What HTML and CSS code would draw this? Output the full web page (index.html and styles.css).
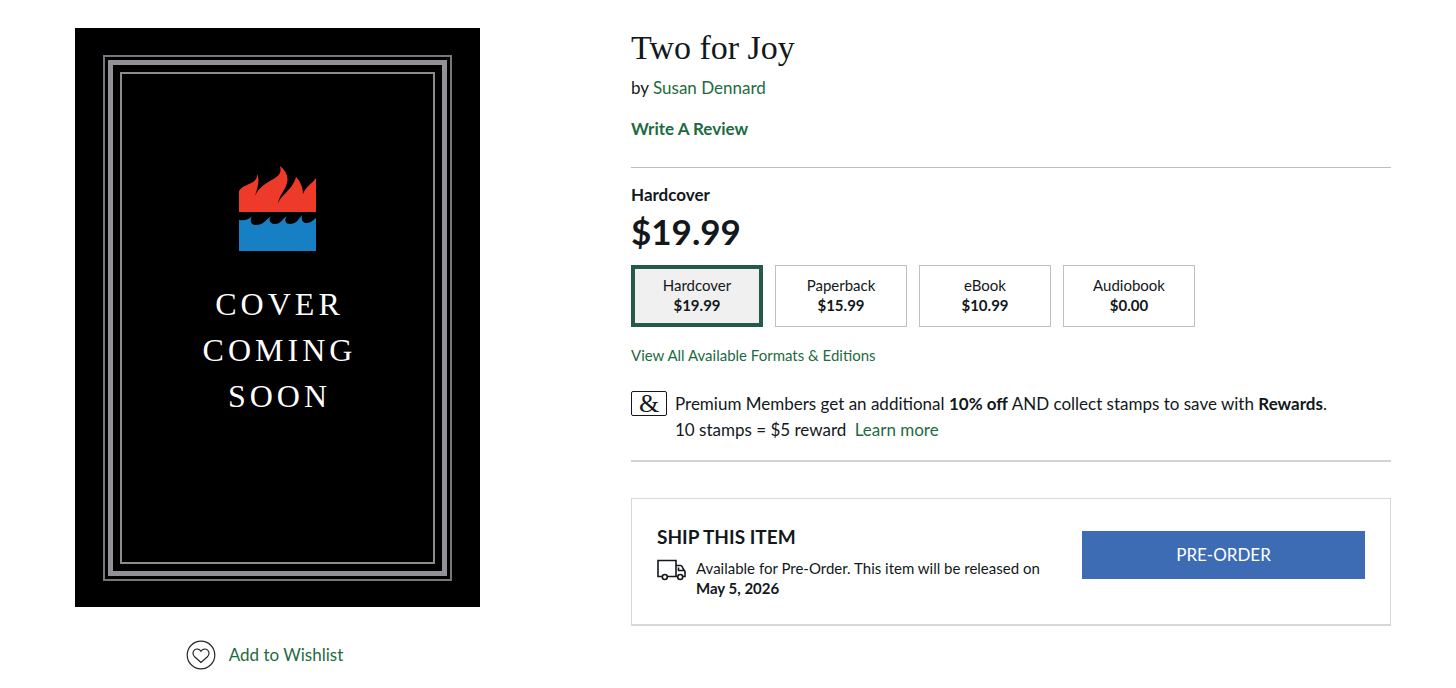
FILE: index.html
```html
<!DOCTYPE html>
<html lang="en">
<head>
<meta charset="utf-8">
<title>Two for Joy</title>
<link rel="stylesheet" href="styles.css">
</head>
<body>
<main class="product">
  <section class="media">
    <div class="cover">
      <div class="frame frame-outer">
        <div class="frame frame-thick">
          <div class="frame frame-inner">
            <svg class="flame" viewBox="0 0 77 86" aria-hidden="true">
              <path fill="#ee3a29" d="M0 46V25C4 19 10 19 14 16C18 13 18 11 18 8C21 14 19 20 16 30C20 20 30 16 36 12C42 8 42 5 41 0C46 4 50 10 48 17C46 25 40 29 39 38C42 28 53 25 57 11C61 15 64 21 64 28C67 20 73 18 77 12V46Z"/>
              <path fill="#177fc4" d="M0 85V54C5 55 10 54 13 50C11 54 11 59 17 59C24 59 27 54 32 50C29 54 31 58 36 58C42 58 43 53 48 50C45 54 46 58 51 58C57 58 59 54 63 49C62 54 64 57 68 57C72 57 74 54 77 52V85Z"/>
            </svg>
            <p class="cover-text">COVER<br>COMING<br>SOON</p>
          </div>
        </div>
      </div>
    </div>
    <button class="wishlist" type="button">
      <svg class="heart" viewBox="0 0 30 30" aria-hidden="true">
        <circle cx="15" cy="15" r="13.8"/>
        <path d="M15 22.5L8.600 16.800C6.500 14.800 6.500 11.800 8.300 10.100C10.100 8.500 13.400 8.500 15 11.200C16.600 8.500 19.900 8.500 21.700 10.100C23.500 11.800 23.500 14.800 21.400 16.800Z"/>
      </svg>
      <span>Add to Wishlist</span>
    </button>
  </section>

  <section class="details">
    <h1 class="title">Two for Joy</h1>
    <p class="author">by <a href="#">Susan Dennard</a></p>
    <p class="review"><a href="#">Write A Review</a></p>

    <div class="purchase">
      <h2 class="format-name">Hardcover</h2>
      <p class="price">$19.99</p>
      <div class="formats">
        <button class="format selected" type="button"><span>Hardcover</span><strong>$19.99</strong></button>
        <button class="format" type="button"><span>Paperback</span><strong>$15.99</strong></button>
        <button class="format" type="button"><span>eBook</span><strong>$10.99</strong></button>
        <button class="format" type="button"><span>Audiobook</span><strong>$0.00</strong></button>
      </div>
      <p class="all-formats"><a href="#">View All Available Formats &amp; Editions</a></p>
      <div class="premium">
        <span class="member-badge">&amp;</span>
        <p class="premium-text">Premium Members get an additional <strong>10% off</strong> AND collect stamps to save with <strong>Rewards</strong>.<br>10 stamps = $5 reward <a class="learn" href="#">Learn more</a></p>
      </div>
    </div>

    <div class="shipping">
      <div class="ship-info">
        <h2 class="ship-title">SHIP THIS ITEM</h2>
        <div class="ship-row">
          <svg class="truck" viewBox="0 0 30 22" aria-hidden="true">
            <path d="M5 17.500H1V1.500H19V17.500H10.500M19 6.500H23.500C25 6.500 25.500 8 26 9.500L28 12.500V17.500H26M19 17.500H20.500M21.500 8.500V11.500H27.500"/>
            <circle cx="7.800" cy="18" r="2.500"/>
            <circle cx="23.200" cy="18" r="2.500"/>
          </svg>
          <p class="ship-text">Available for Pre-Order. This item will be released on <strong>May 5, 2026</strong></p>
        </div>
      </div>
      <button class="preorder" type="button">PRE-ORDER</button>
    </div>
  </section>
</main>
</body>
</html>
```

FILE: styles.css
```css
* {
  box-sizing: border-box;
}

body {
  margin: 0;
  background: #fff;
  color: #12181b;
  font-family: Lato, "Liberation Sans", sans-serif;
  font-size: 17px;
  line-height: 26px;
}

h1, h2, p {
  margin: 0;
}

button {
  font: inherit;
  color: inherit;
  cursor: pointer;
}

a {
  color: #1d6b41;
  text-decoration: none;
}

.product {
  display: grid;
  grid-template-columns: 405fr 760fr;
  column-gap: 151px;
  padding: 28px 65px 16px 75px;
}

.media {
  display: flex;
  flex-direction: column;
  align-items: center;
  gap: 33px;
}

.cover {
  display: flex;
  width: 100%;
  aspect-ratio: 405 / 579;
  padding: 27px 28px 26px;
  background: #000;
}

.frame {
  display: flex;
  flex: 1;
}

.frame-outer {
  padding: 3px;
  border: 2px solid #77777b;
}

.frame-thick {
  padding: 7px;
  border: 5px solid #929197;
}

.frame-inner {
  flex-direction: column;
  align-items: center;
  padding-top: 92px;
  border: 2px solid #8c8c8f;
}

.flame {
  width: 77px;
  height: 86px;
}

.cover-text {
  margin-top: 29px;
  padding-left: 4px;
  color: #fff;
  font-family: "Liberation Serif", serif;
  font-size: 32px;
  line-height: 46px;
  letter-spacing: 4px;
  text-align: center;
}

.wishlist {
  display: flex;
  align-items: center;
  gap: 13px;
  margin-right: 26px;
  padding: 0;
  border: 0;
  background: none;
  color: #1d6b41;
}

.heart {
  width: 30px;
  height: 30px;
  fill: none;
  stroke: #25282a;
  stroke-width: 1.2;
}

.title {
  font-family: "Liberation Serif", serif;
  font-size: 34px;
  font-weight: 400;
  line-height: 40px;
}

.author {
  margin-top: 7px;
}

.review {
  margin-top: 15px;
  font-weight: 700;
}

.purchase {
  margin-top: 25px;
  padding: 15px 0 17px;
  border-top: 1px solid #bdbdbd;
  border-bottom: 2px solid #d3d3d3;
}

.format-name {
  font-size: 17px;
  line-height: 24px;
}

.price {
  margin-top: 2px;
  font-size: 35px;
  font-weight: 700;
  line-height: 44px;
}

.formats {
  display: flex;
  flex-wrap: wrap;
  gap: 12px;
  margin-top: 12px;
}

.format {
  display: flex;
  flex-direction: column;
  align-items: center;
  justify-content: center;
  width: 132px;
  height: 62px;
  padding: 0 0 2px;
  border: 1px solid #bfc0c0;
  background: #fff;
  font-size: 15px;
  line-height: 20px;
}

.format.selected {
  border: 4px solid #255a46;
  background: #f0f0f0;
}

.all-formats {
  margin-top: 15px;
  font-size: 15px;
}

.premium {
  display: flex;
  gap: 8px;
  margin-top: 23px;
}

.member-badge {
  flex: none;
  width: 36px;
  height: 25px;
  border: 1px solid #12181b;
  border-radius: 2px;
  font-family: "Liberation Serif", serif;
  font-size: 26px;
  line-height: 24px;
  text-align: center;
}

.learn {
  margin-left: 4px;
}

.shipping {
  display: flex;
  justify-content: space-between;
  align-items: flex-start;
  gap: 24px;
  margin-top: 36px;
  padding: 25px 25px 26px;
  border: 1px solid #d8d8d8;
  border-bottom-width: 2px;
}

.ship-title {
  font-size: 19px;
}

.ship-row {
  display: flex;
  gap: 9px;
  margin-top: 8px;
}

.truck {
  flex: none;
  width: 30px;
  height: 22px;
  margin-top: 1px;
  fill: none;
  stroke: #12181b;
  stroke-width: 1.6;
}

.ship-text {
  max-width: 352px;
  font-size: 15px;
  line-height: 20px;
}

.preorder {
  flex: 0 1 283px;
  height: 48px;
  margin-top: 7px;
  padding: 0 0 1px;
  border: 0;
  background: #3d6cb5;
  color: #fff;
}
```
